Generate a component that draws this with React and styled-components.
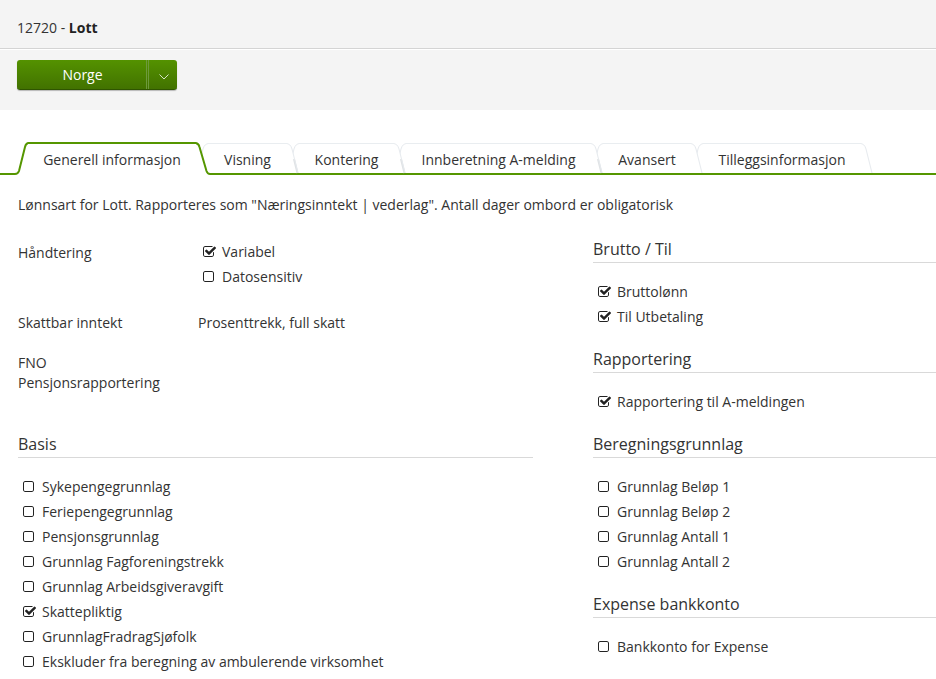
import styled, { createGlobalStyle } from 'styled-components';

const GlobalStyle = createGlobalStyle`
  * {
    box-sizing: border-box;
  }
  body {
    margin: 0;
    overflow: hidden;
    background: #fff;
    color: #333;
    font-family: 'Open Sans', 'Liberation Sans', sans-serif;
    font-size: 14px;
    line-height: 20px;
  }
`;

const Page = styled.div`
  width: 936px;
  height: 679px;
  overflow: hidden;
`;

const Title = styled.header`
  height: 49px;
  padding: 18px 17px 0;
  background: #f4f4f4;
  border-bottom: 1px solid #d4d4d4;

  b {
    color: #222;
  }
`;

const Toolbar = styled.div`
  height: 61px;
  padding: 10px 17px;
  background: #f4f4f4;
  border-top: 1px solid #fff;
`;

const SplitButton = styled.div`
  display: flex;
  width: 160px;
  height: 30px;
  border-radius: 3px;
  border-bottom: 1px solid #2f5500;
  background: linear-gradient(#549200, #427200);
  box-shadow: 0 1px 1px rgba(0, 0, 0, 0.25);
  overflow: hidden;
`;

const ButtonLabel = styled.button`
  width: 130px;
  padding: 0 0 0 2px;
  border: 0;
  border-right: 1px solid #6d9a3c;
  background: none;
  color: #fff;
  font: inherit;
`;

const ButtonArrow = styled.button`
  display: flex;
  flex: 1;
  align-items: center;
  justify-content: center;
  margin-left: 1px;
  padding: 5px 0 0 1px;
  border: 0;
  border-left: 1px solid #6d9a3c;
  background: none;
`;

const Tabs = styled.nav`
  display: flex;
  height: 65px;
  padding: 32px 0 0 14px;
  border-bottom: 2px solid #559600;
`;

const Tab = styled.div`
  position: relative;
  z-index: ${({ $order }) => $order};
  display: flex;
  height: 33px;
  margin-left: ${({ $first }) => ($first ? 0 : '-16px')};
`;

const TabLabel = styled.div`
  width: ${({ $width }) => $width}px;
  height: ${({ $active }) => ($active ? 33 : 30)}px;
  margin-top: ${({ $active }) => ($active ? 0 : 1)}px;
  padding-top: 6px;
  border-top: ${({ $active }) => ($active ? '2px solid #559600' : '1px solid #e9edf0')};
  background: #fff;
  text-align: center;
  white-space: nowrap;
`;

const Edge = styled.svg`
  flex: none;
  width: 14px;
  height: 33px;
`;

const Content = styled.main`
  padding: 20px 0 0 18px;
`;

const Columns = styled.div`
  display: flex;
  gap: 60px;
`;

const Left = styled.div`
  width: 515px;
  padding-top: 24px;
`;

const Right = styled.div`
  flex: 1;
  padding-top: 22px;
`;

const Field = styled.div`
  display: flex;
  min-height: ${({ $height }) => $height}px;
`;

const FieldName = styled.div`
  width: 180px;
  padding-top: ${({ $top }) => $top || 2}px;
`;

const FieldValue = styled.div`
  padding-top: ${({ $top }) => $top || 0}px;
`;

const Section = styled.section`
  margin-bottom: 18px;
`;

const Heading = styled.h2`
  height: 26px;
  margin: 0 0 16px;
  border-bottom: 1px solid #d9d9d9;
  font-size: 16px;
  font-weight: 400;
  line-height: 24px;
`;

const Check = styled.label`
  display: flex;
  height: 25px;
  padding-left: 5px;
  line-height: 25px;
`;

const CheckIcon = styled.svg`
  width: 14px;
  height: 14px;
  margin: 6px 5px 0 0;
  fill: #222;
`;

const tabs = [
  { name: 'Generell informasjon', width: 168, active: true },
  { name: 'Visning', width: 79 },
  { name: 'Kontering', width: 95 },
  { name: 'Innberetning A-melding', width: 185 },
  { name: 'Avansert', width: 88 },
  { name: 'Tilleggsinformasjon', width: 158 },
];

const basis = [
  { name: 'Sykepengegrunnlag' },
  { name: 'Feriepengegrunnlag' },
  { name: 'Pensjonsgrunnlag' },
  { name: 'Grunnlag Fagforeningstrekk' },
  { name: 'Grunnlag Arbeidsgiveravgift' },
  { name: 'Skattepliktig', checked: true },
  { name: 'GrunnlagFradragSjøfolk' },
  { name: 'Ekskluder fra beregning av ambulerende virksomhet' },
];

const sections = [
  {
    title: 'Brutto / Til',
    items: [
      { name: 'Bruttolønn', checked: true },
      { name: 'Til Utbetaling', checked: true },
    ],
  },
  { title: 'Rapportering', items: [{ name: 'Rapportering til A-meldingen', checked: true }] },
  {
    title: 'Beregningsgrunnlag',
    items: [
      { name: 'Grunnlag Beløp 1' },
      { name: 'Grunnlag Beløp 2' },
      { name: 'Grunnlag Antall 1' },
      { name: 'Grunnlag Antall 2' },
    ],
  },
  { title: 'Expense bankkonto', items: [{ name: 'Bankkonto for Expense' }] },
];

function Checkbox({ name, checked }) {
  return (
    <Check>
      {checked ? (
        <CheckIcon viewBox='64 0 1792 1792'>
          <path d='M1472 930v318q0 119-84.5 203.5t-203.5 84.5h-832q-119 0-203.5-84.5t-84.5-203.5v-832q0-119 84.5-203.5t203.5-84.5h832q63 0 117 25 15 7 18 23 3 17-9 29l-49 49q-10 10-23 10-3 0-9-2-23-6-45-6h-832q-66 0-113 47t-47 113v832q0 66 47 113t113 47h832q66 0 113-47t47-113v-254q0-13 9-22l64-64q10-10 23-10 6 0 12 3 20 8 20 29zm231-489l-814 814q-24 24-57 24t-57-24l-430-430q-24-24-24-57t24-57l110-110q24-24 57-24t57 24l263 263 647-647q24-24 57-24t57 24l110 110q24 24 24 57t-24 57z' />
        </CheckIcon>
      ) : (
        <CheckIcon viewBox='192 0 1792 1792'>
          <path d='M1312 256h-832q-66 0-113 47t-47 113v832q0 66 47 113t113 47h832q66 0 113-47t47-113v-832q0-66-47-113t-113-47zm288 160v832q0 119-84.5 203.5t-203.5 84.5h-832q-119 0-203.5-84.5t-84.5-203.5v-832q0-119 84.5-203.5t203.5-84.5h832q119 0 203.5 84.5t84.5 203.5z' />
        </CheckIcon>
      )}
      {name}
    </Check>
  );
}

const activeLeft = 'M0 32H1Q4 32 5 29L11 5Q12 1 15 1';
const activeRight = 'M0 32Q2.500 32 3.500 29L10.500 5Q11.500 1 15 1';

// slanted side of a tab, mirrored for the right one
function TabEdge({ active, right, shadow }) {
  const activeLine = right ? activeRight : activeLeft;
  const line = active ? activeLine : 'M3 31L9 7Q10.500 1.500 15 1.500';
  return (
    <Edge viewBox='0 0 14 33'>
      <g transform={right ? 'translate(14 0) scale(-1 1)' : undefined}>
        <path d={active ? `${line}V33H0Z` : `${line}V31Z`} fill='#fff' />
        {shadow && <path d='M3.500 31L7 17' fill='none' stroke='#e0e3e5' strokeWidth='2' />}
        <path d={line} fill='none' stroke={active ? '#559600' : '#e6eaee'} strokeWidth={active ? 2 : 1} />
      </g>
    </Edge>
  );
}

export default function App() {
  return (
    <Page>
      <GlobalStyle />
      <Title>
        12720 - <b>Lott</b>
      </Title>
      <Toolbar>
        <SplitButton>
          <ButtonLabel>Norge</ButtonLabel>
          <ButtonArrow>
            <svg width='10' height='6' viewBox='0 0 10 6'>
              <path d='M0.500 0.500L5 5L9.500 0.500' fill='none' stroke='#d5e3c4' />
            </svg>
          </ButtonArrow>
        </SplitButton>
      </Toolbar>
      <Tabs>
        {tabs.map((tab, i) => (
          <Tab key={tab.name} $first={i === 0} $order={tabs.length - i}>
            <TabEdge active={tab.active} />
            <TabLabel $width={tab.width} $active={tab.active}>
              {tab.name}
            </TabLabel>
            <TabEdge active={tab.active} shadow={i > 0 && i < tabs.length - 2} right />
          </Tab>
        ))}
      </Tabs>
      <Content>
        <div>Lønnsart for Lott. Rapporteres som "Næringsinntekt | vederlag". Antall dager ombord er obligatorisk</div>
        <Columns>
          <Left>
            <Field $height={72}>
              <FieldName $top={4}>Håndtering</FieldName>
              <FieldValue>
                <Checkbox name='Variabel' checked />
                <Checkbox name='Datosensitiv' />
              </FieldValue>
            </Field>
            <Field $height={40}>
              <FieldName>Skattbar inntekt</FieldName>
              <FieldValue $top={2}>Prosenttrekk, full skatt</FieldValue>
            </Field>
            <Field $height={81}>
              <FieldName>
                FNO
                <br />
                Pensjonsrapportering
              </FieldName>
            </Field>
            <Section>
              <Heading>Basis</Heading>
              {basis.map((item) => (
                <Checkbox key={item.name} {...item} />
              ))}
            </Section>
          </Left>
          <Right>
            {sections.map((section) => (
              <Section key={section.title}>
                <Heading>{section.title}</Heading>
                {section.items.map((item) => (
                  <Checkbox key={item.name} {...item} />
                ))}
              </Section>
            ))}
          </Right>
        </Columns>
      </Content>
    </Page>
  );
}
